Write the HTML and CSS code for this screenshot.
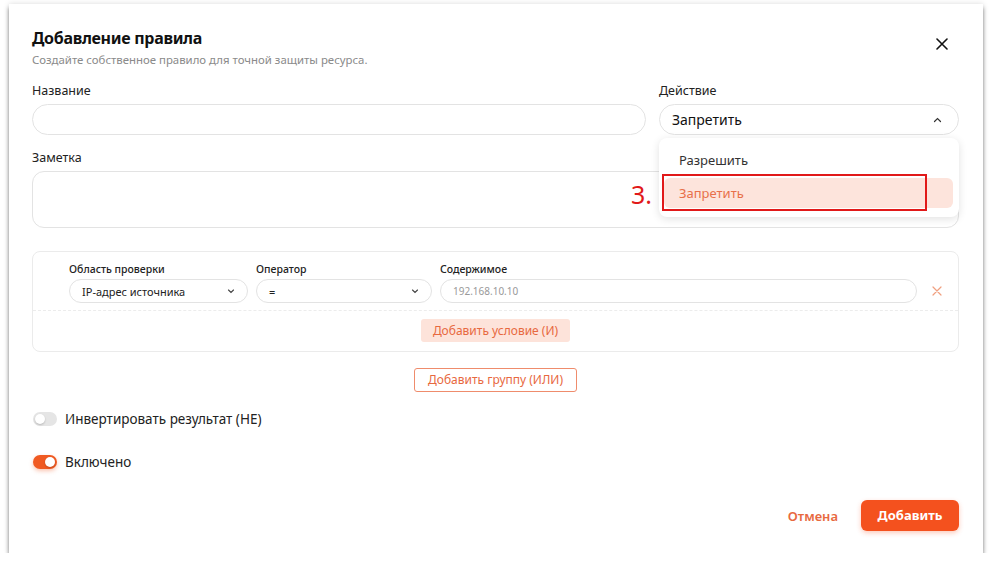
FILE: index.html
```html
<!DOCTYPE html>
<html>
<head>
<meta charset="utf-8" />
<title>Добавление правила</title>
<link rel="stylesheet" href="styles.css">
</head>
<body>

<div class="dialog">
    <div class="dlg-head">
        <div>
            <h1 class="dlg-title">Добавление правила</h1>
            <p class="dlg-sub">Создайте собственное правило для точной защиты ресурса.</p>
        </div>
        <a class="close" href="#">
            <svg width="12" height="12" viewBox="0 0 12 12"><path d="M1 1L11 11M11 1L1 11" stroke="#111" stroke-width="1.6" stroke-linecap="round"/></svg>
        </a>
    </div>

    <div class="row-top">
        <div class="field">
            <label>Название</label>
            <div class="input"></div>
        </div>
        <div class="field action">
            <label>Действие</label>
            <div class="input select">
                <span>Запретить</span>
                <svg width="9" height="6" viewBox="0 0 9 6"><path d="M1.5 4.5L4.5 1.5L7.5 4.5" fill="none" stroke="#333" stroke-width="1.2" stroke-linecap="round"/></svg>
            </div>
            <ul class="menu">
                <li>Разрешить</li>
                <li class="on">Запретить</li>
            </ul>
            <div class="mark"></div>
            <div class="mark-num">3.</div>
        </div>
    </div>

    <div class="field">
        <label>Заметка</label>
        <div class="input area"></div>
    </div>

    <div class="group">
        <div class="cond">
            <div class="col">
                <label>Область проверки</label>
                <div class="sm-input">
                    <span>IP-адрес источника</span>
                    <svg width="8" height="5" viewBox="0 0 8 5"><path d="M1.5 1L4 3.5L6.5 1" fill="none" stroke="#444" stroke-width="1.1" stroke-linecap="round"/></svg>
                </div>
            </div>
            <div class="col">
                <label>Оператор</label>
                <div class="sm-input">
                    <span>=</span>
                    <svg width="8" height="5" viewBox="0 0 8 5"><path d="M1.5 1L4 3.5L6.5 1" fill="none" stroke="#444" stroke-width="1.1" stroke-linecap="round"/></svg>
                </div>
            </div>
            <div class="col">
                <label>Содержимое</label>
                <div class="sm-input ph">192.168.10.10</div>
            </div>
            <a class="del" href="#">
                <svg width="10" height="10" viewBox="0 0 10 10"><path d="M1 1L9 9M9 1L1 9" stroke="#f0a080" stroke-width="1.2" stroke-linecap="round"/></svg>
            </a>
        </div>
        <div class="group-foot">
            <a class="btn-soft" href="#">Добавить условие (И)</a>
        </div>
    </div>

    <div class="add-group">
        <a class="btn-line" href="#">Добавить группу (ИЛИ)</a>
    </div>

    <div class="switch-row">
        <span class="switch"></span>
        <span>Инвертировать результат (НЕ)</span>
    </div>
    <div class="switch-row">
        <span class="switch checked"></span>
        <span>Включено</span>
    </div>

    <div class="dlg-foot">
        <a class="cancel" href="#">Отмена</a>
        <a class="btn-main" href="#">Добавить</a>
    </div>
</div>

</body>
</html>
```

FILE: styles.css
```css
html * { margin:0; padding:0; box-sizing:border-box; }
body { background:#fff; font-family:"Noto Sans", "Noto Sans CJK SC", sans-serif; color:#222; }
a { text-decoration:none; }
ul { list-style:none; }

.dialog {
	position:relative;
	margin:4px 0 0 9px;
	width:974px;
	height:549px;
	background:#fff;
	padding:23px 24px 22px 23px;
	display:flex;
	flex-direction:column;
	box-shadow:0 4px 4px rgba(0,0,0,.45), 0 0 6px rgba(0,0,0,.14);
}

.dlg-head { display:flex; justify-content:space-between; }
.dlg-title { font-size:16px; line-height:22px; font-weight:700; color:#111; letter-spacing:-.3px; }
.dlg-sub { margin-top:3px; font-size:11.4px; line-height:16px; color:#8a8a8a; }
.close { margin:6px 11px 0 0; height:12px; }

.field { display:flex; flex-direction:column; }
.field label {
	font-size:12.5px;
	line-height:16px;
	color:#222;
	margin-bottom:5px;
}
.input {
	height:31px;
	border:1px solid #e3e3e3;
	border-radius:16px;
	background:#fff;
}
.area { height:57px; border-radius:12px; }

.row-top { display:flex; gap:13px; margin:15px 0 15px; }
.row-top .field:first-child { flex:1; }
.action { width:300px; position:relative; }
.select {
	display:flex;
	align-items:center;
	justify-content:space-between;
	padding:0 16px 0 12px;
	font-size:14px;
	color:#111;
}

/* выпадающий список действия */
.menu {
	position:absolute;
	top:55px;
	left:0;
	width:300px;
	background:#fff;
	border-radius:8px;
	box-shadow:0 2px 8px rgba(0,0,0,.12);
	padding:7px 6px 9px 5px;
	z-index:5;
}
.menu li {
	height:30px;
	line-height:30px;
	padding-left:15px;
	font-size:13px;
	color:#333;
	border-radius:6px;
}
.menu li + li { margin-top:3px; }
.menu li.on { background:#fde4dc; color:#e8704a; }
.mark {
	position:absolute;
	top:91px;
	left:3px;
	width:265px;
	height:37px;
	border:2px solid #e11919;
	z-index:6;
}
.mark-num {
	position:absolute;
	top:97px;
	left:-28px;
	font-size:25px;
	line-height:28px;
	color:#e11919;
	z-index:6;
}

.group {
	margin-top:23px;
	border:1px solid #ebebeb;
	border-radius:8px;
	height:101px;
}
.cond {
	display:grid;
	grid-template-columns:179px 176px 1fr 33px;
	column-gap:8px;
	align-content:start;
	padding:10px 0 0 36px;
	height:59px;
	border-bottom:1px dashed #ececec;
}
.col { display:flex; flex-direction:column; }
.col label { font-size:10.5px; line-height:14px; font-weight:500; color:#222; margin-bottom:3px; }
.sm-input {
	height:24px;
	border:1px solid #e3e3e3;
	border-radius:12px;
	display:flex;
	align-items:center;
	justify-content:space-between;
	padding:0 12px 0 12px;
	font-size:11px;
	color:#222;
}
.sm-input.ph { color:#999; font-size:10px; }
.del {
	align-self:end;
	height:24px;
	display:flex;
	align-items:center;
	margin-left:7px;
}

.group-foot { display:flex; justify-content:center; padding-top:8px; }
.btn-soft {
	display:block;
	height:23px;
	line-height:23px;
	padding:0 12px;
	background:#fde3da;
	border-radius:3px;
	font-size:12px;
	color:#e8693f;
}

.add-group { display:flex; justify-content:center; margin-top:16px; }
.btn-line {
	display:block;
	height:24px;
	line-height:22px;
	padding:0 13px;
	border:1px solid #ef8c6c;
	border-radius:3px;
	font-size:12px;
	color:#e8693f;
}

.switch-row {
	display:flex;
	align-items:center;
	gap:8px;
	font-size:13.5px;
	color:#222;
	height:16px;
}
.switch-row + .switch-row { margin-top:27px; }
.add-group + .switch-row { margin-top:19px; }
.switch {
	position:relative;
	width:24px;
	height:14px;
	margin-left:1px;
	border-radius:7px;
	background:#e5e5e5;
}
.switch::after {
	content:"";
	position:absolute;
	top:2px;
	left:2px;
	width:10px;
	height:10px;
	border-radius:50%;
	background:#fff;
	box-shadow:0 1px 2px rgba(0,0,0,.2);
}
.switch.checked { background:#f05a22; box-shadow:0 2px 4px rgba(240,90,34,.35); }
.switch.checked::after { left:12px; }

.dlg-foot {
	margin-top:auto;
	display:flex;
	justify-content:flex-end;
	align-items:center;
	gap:23px;
}
.cancel { font-size:13px; font-weight:600; color:#e8693f; }
.btn-main {
	display:block;
	height:31px;
	line-height:31px;
	width:98px;
	text-align:center;
	background:#f4511e;
	border-radius:6px;
	font-size:13px;
	font-weight:700;
	color:#fff;
	box-shadow:0 2px 5px rgba(244,81,30,.3);
}
```
